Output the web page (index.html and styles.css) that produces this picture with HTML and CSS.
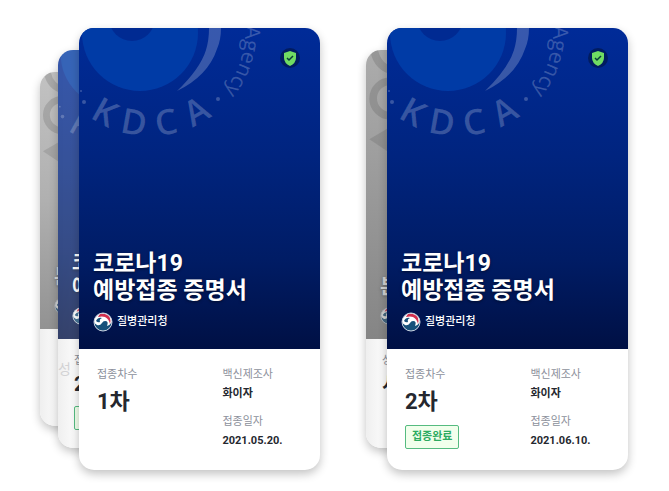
FILE: index.html
```html
<!DOCTYPE html>
<html lang="ko">
<head>
<meta charset="utf-8">
<meta name="viewport" content="width=device-width, initial-scale=1">
<title>코로나19 예방접종 증명서</title>
<link rel="stylesheet" href="styles.css">
</head>
<body>
<svg class="defs" aria-hidden="true">
  <defs>
    <path id="agency-arc" d="M245 26 A95 95 0 0 1 150 126"/>
    <symbol id="seal" viewBox="79 28 241 140">
      <circle cx="140" cy="33" r="58" fill="#003ba6"/>
      <circle cx="132" cy="18" r="23" fill="#002a92"/>
      <g fill="#fff" fill-opacity=".22">
        <path d="M177 91Q200 69 206 50Q209 40 209 28L221 28Q221 40 217 49Q208 76 177 91Z"/>
        <circle cx="81" cy="91" r="1"/>
        <circle cx="84" cy="102" r="2"/>
        <circle cx="218" cy="99" r="2"/>
        <g class="seal-initials" text-anchor="middle">
          <text transform="translate(150 31) rotate(29)" y="105">K</text>
          <text transform="translate(150 31) rotate(10)" y="105">D</text>
          <text transform="translate(150 31) rotate(-10)" y="105">C</text>
          <text transform="translate(150 31) rotate(-30)" y="105">A</text>
        </g>
        <text class="seal-agency"><textPath href="#agency-arc">Agency</textPath></text>
      </g>
    </symbol>
    <symbol id="pattern" viewBox="0 0 217 130">
      <g fill="none" stroke="#000" stroke-opacity=".12" stroke-width="8">
        <path d="M5 0Q8 18 26 22"/>
        <circle cx="22" cy="50" r="18"/>
      </g>
      <path d="M0 92L24 78V108Z" fill="#000" fill-opacity=".1"/>
    </symbol>
    <symbol id="taegeuk" viewBox="0 0 20 20">
      <circle cx="10" cy="10" r="9" fill="#fff"/>
      <path d="M1 10A9 9 0 0 0 19 10Q17 13 14 14Q16 9 12 9Q10 9 9 11Q7 14 4 13Q2 12 1 10Z" fill="#17507a"/>
      <path d="M7 2Q14 1 17 6Q18 9 17 12Q16 7 12 5Q9 4 5 5Q6 3 7 2Z" fill="#d0304e"/>
      <path d="M3 9Q5 5 9 6Q6 7 7 10Q5 11 3 9Z" fill="#17507a"/>
      <circle cx="10" cy="10" r="9" fill="none" stroke="#c5cfdd"/>
    </symbol>
    <symbol id="shield" viewBox="0 0 22 22">
      <circle cx="11" cy="11" r="10" fill="#001c60"/>
      <path d="M11 4L17 6V11Q17 16 11 19Q5 16 5 11V6Z" fill="#70dc63"/>
      <path d="M8 11L10 13L14 9" fill="none" stroke="#073d38" stroke-width="1.500"/>
    </symbol>
  </defs>
</svg>

<main class="decks">
  <section class="deck">
    <div class="card back back-far gray" aria-hidden="true">
      <div class="cover">
        <svg class="seal"><use href="#pattern"/></svg>
        <p class="title">본</p>
        <p class="agency"><svg class="logo"><use href="#taegeuk"/></svg></p>
      </div>
    </div>
    <div class="card back back-near blue" aria-hidden="true">
      <div class="cover">
        <svg class="seal"><use href="#seal"/></svg>
        <p class="title">코<br>예</p>
        <p class="agency"><svg class="logo"><use href="#taegeuk"/></svg></p>
      </div>
      <div class="details">
        <span class="ghost">성</span>
        <div><p class="label">접</p><p class="dose">2</p><span class="badge"></span></div>
      </div>
    </div>
    <article class="card front">
      <header class="cover">
        <svg class="seal" aria-hidden="true"><use href="#seal"/></svg>
        <svg class="shield" aria-hidden="true"><use href="#shield"/></svg>
        <h2 class="title">코로나19<br>예방접종 증명서</h2>
        <p class="agency"><svg class="logo" aria-hidden="true"><use href="#taegeuk"/></svg>질병관리청</p>
      </header>
      <div class="details">
        <dl>
          <dt class="label">접종차수</dt>
          <dd class="dose">1차</dd>
        </dl>
        <dl>
          <dt class="label">백신제조사</dt>
          <dd class="value">화이자</dd>
          <dt class="label">접종일자</dt>
          <dd class="value">2021.05.20.</dd>
        </dl>
      </div>
    </article>
  </section>

  <section class="deck">
    <div class="card back back-near gray" aria-hidden="true">
      <div class="cover">
        <svg class="seal"><use href="#pattern"/></svg>
        <p class="title">본</p>
        <p class="agency"><svg class="logo"><use href="#taegeuk"/></svg></p>
      </div>
      <div class="details">
        <div><p class="label">성</p><p class="dose">시</p></div>
      </div>
    </div>
    <article class="card front">
      <header class="cover">
        <svg class="seal" aria-hidden="true"><use href="#seal"/></svg>
        <svg class="shield" aria-hidden="true"><use href="#shield"/></svg>
        <h2 class="title">코로나19<br>예방접종 증명서</h2>
        <p class="agency"><svg class="logo" aria-hidden="true"><use href="#taegeuk"/></svg>질병관리청</p>
      </header>
      <div class="details">
        <dl>
          <dt class="label">접종차수</dt>
          <dd class="dose">2차</dd>
          <dd class="badge">접종완료</dd>
        </dl>
        <dl>
          <dt class="label">백신제조사</dt>
          <dd class="value">화이자</dd>
          <dt class="label">접종일자</dt>
          <dd class="value">2021.06.10.</dd>
        </dl>
      </div>
    </article>
  </section>
</main>
</body>
</html>
```
FILE: styles.css
```css
* { box-sizing: border-box; }

body {
  margin: 0;
  background: #fff;
  color: #25282f;
  font-family: Roboto, "Noto Sans CJK KR", sans-serif;
  font-size: 11px;
  line-height: 16px;
}

h2, p, dl, dd { margin: 0; }

.defs { position: absolute; width: 0; height: 0; }

.seal-initials { font: 600 35px "Open Sans", sans-serif; }
.seal-agency { font: 500 21px "Open Sans", sans-serif; }

.decks {
  display: grid;
  grid-template-columns: 1fr 1fr;
  gap: 67px;
  padding: 28px 41px 20px 79px;
}

.deck { position: relative; }

.card {
  border-radius: 15px;
  overflow: hidden;
  background: #fff;
  box-shadow: 0 4px 10px rgba(0, 0, 0, .24);
}

.front { position: relative; }

.cover {
  position: relative;
  display: flex;
  flex-direction: column;
  justify-content: flex-end;
  gap: 8px;
  min-height: 321px;
  padding: 0 14px 17px;
  color: #fff;
  background: linear-gradient(#002b98, #00247f 40%, #001c65 72%, #001044);
}

.seal {
  position: absolute;
  top: 0;
  left: 0;
  width: 100%;
  aspect-ratio: 241 / 140;
}

.shield {
  position: absolute;
  top: 19px;
  right: 19px;
  width: 22px;
  height: 22px;
}

.title {
  position: relative;
  font-size: 23px;
  font-weight: 700;
  line-height: 27px;
  white-space: nowrap;
  text-shadow: 0 1px 3px rgba(0, 0, 0, .5);
}

.agency {
  position: relative;
  display: flex;
  align-items: center;
  gap: 4px;
  font-weight: 500;
  white-space: nowrap;
}

.logo { width: 20px; height: 20px; flex: none; }

.details {
  position: relative;
  display: grid;
  grid-template-columns: 3fr 2fr;
  padding: 18px 14px 21px 18px;
}

.label { color: #8d919c; white-space: nowrap; }

.value { margin-top: 3px; font-weight: 700; white-space: nowrap; }
.value + .label { margin-top: 12px; }

.dose {
  margin-top: 5px;
  font-size: 22px;
  font-weight: 700;
  line-height: 28px;
}

.badge {
  display: block;
  width: fit-content;
  min-height: 24px;
  margin-top: 9px;
  padding: 3px 6px;
  border: 1px solid #55bb80;
  border-radius: 2px;
  background: #f1ffec;
  color: #2cab61;
  font-weight: 700;
  white-space: nowrap;
}

.back {
  position: absolute;
  background: linear-gradient(90deg, #efefef, #fafafa 16px);
}

.back-near { top: 22px; bottom: 22px; left: -21px; width: 90%; }
.back-far { top: 44px; bottom: 44px; left: -39px; width: 80%; }

.back .cover { padding-bottom: 14px; }
.back-near .cover { min-height: 289px; }
.back-far .cover { min-height: 257px; }
.back .title { font-size: 20px; line-height: 24px; }
.back .logo { width: 18px; height: 18px; }
.back .details { padding: 14px 16px; }
.back .dose { margin-top: 2px; font-size: 20px; line-height: 26px; }
.back .badge { width: 48px; }

.blue .cover { opacity: .78; }
.gray .cover { background: linear-gradient(#acacac, #999 50%, #858585); }
.back-far .cover { background: linear-gradient(#c2c2c2, #b0b0b0 50%, #929292); }
.gray .title, .gray .logo { opacity: .6; }

.ghost {
  position: absolute;
  top: 22px;
  left: 0;
  color: #d2d2d4;
  font-size: 14px;
}
```
